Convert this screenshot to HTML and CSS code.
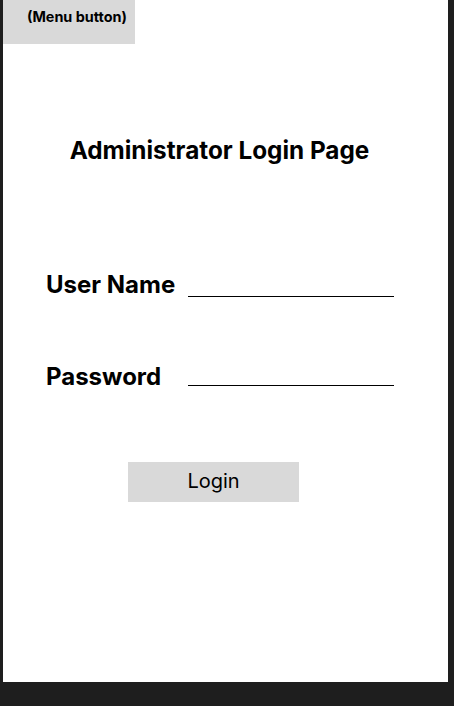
FILE: index.html
```html
<!DOCTYPE html>
<html>
<head>
<meta charset="utf-8">
<link rel="stylesheet" href="styles.css">
</head>
<body>
<div class="frame">
  <div class="menu">(Menu button)</div>
  <h1 class="title">Administrator Login Page</h1>
  <div class="form">
    <div class="row row-user">
      <span class="label">User Name</span>
      <span class="field"></span>
    </div>
    <div class="row row-pass">
      <span class="label">Password</span>
      <span class="field"></span>
    </div>
  </div>
  <div class="btn-wrap"><div class="btn">Login</div></div>
</div>
</body>
</html>
```
FILE: styles.css
```css
html, body {
  margin: 0;
  padding: 0;
  background: #1e1e1e;
  font-family: Inter, "Noto Sans", sans-serif;
  color: #000;
}
.frame {
  margin-left: 3px;
  width: 445px;
  height: 682px;
  background: #fff;
  display: flex;
  flex-direction: column;
}
.menu {
  width: 132px;
  height: 44px;
  background: #d9d9d9;
  font-size: 14.4px;
  font-weight: 700;
  box-sizing: border-box;
  padding: 8px 0 0 24px;
  line-height: 17px;
}
.title {
  margin: 91px 0 0 0;
  font-size: 24.3px;
  font-weight: 700;
  text-align: center;
  line-height: 30px;
  padding-right: 12px;
}
.form {
  margin-top: 106px;
  padding-left: 43px;
  display: flex;
  flex-direction: column;
}
.row {
  display: flex;
  align-items: flex-start;
  height: 28px;
}
.label {
  font-size: 24px;
  font-weight: 700;
  line-height: 28px;
  width: 142px;
}
.row-pass { margin-top: 64px; }
.field {
  width: 206px;
  border-bottom: 1px solid #000;
}
.row-user .field { height: 25px; }
.row-pass .field { height: 22px; }
.btn-wrap {
  margin-top: 71px;
  padding-left: 125px;
}
.btn {
  width: 171px;
  height: 40px;
  background: #d9d9d9;
  font-size: 20px;
  line-height: 38px;
  text-align: center;
}
```
